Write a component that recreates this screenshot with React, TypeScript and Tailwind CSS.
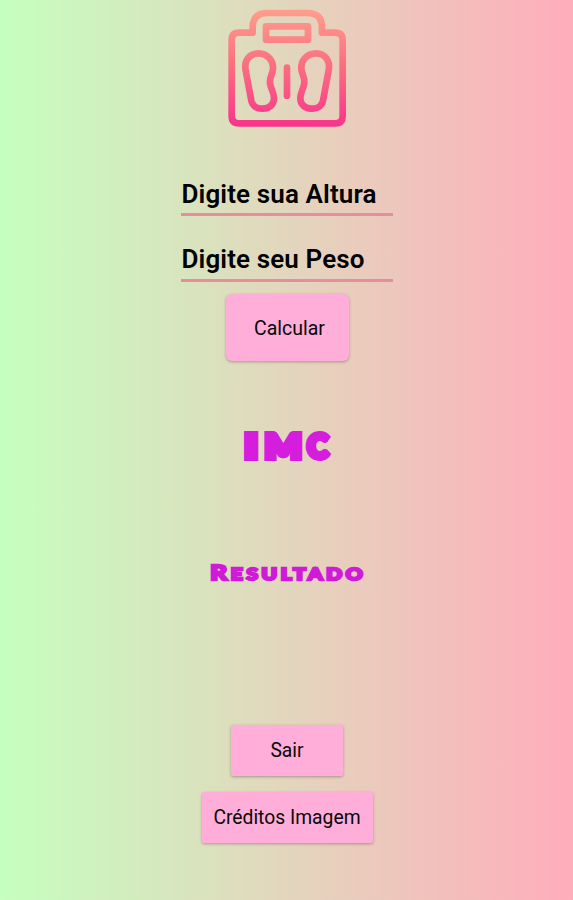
import React from "react";

function ScaleIcon() {
  return (
    <svg width="140" height="135" viewBox="0 0 420 405" fill="none" className="block">
      <defs>
        <linearGradient id="scale" gradientUnits="userSpaceOnUse" x1="0" y1="28" x2="0" y2="380">
          <stop offset="0" stopColor="#ff9e8c" />
          <stop offset="0.5" stopColor="#fb6c80" />
          <stop offset="1" stopColor="#f9338c" />
        </linearGradient>
      </defs>
      <g stroke="url(#scale)" strokeWidth="20" strokeLinecap="round" strokeLinejoin="round">
        <path d="M107 98H66Q44 98 44 120V348Q44 370 66 370H355Q377 370 377 348V120Q377 98 355 98H315V83Q315 39 271 39H151Q107 39 107 83Z" />
        <path d="M147 79H273V119H147Z" />
        <path d="M210 203V287" />
        <path d="M86 211C80 181 98 160 124 160C153 160 170 184 168 207C166 224 157 232 159 249C161 266 171 277 171 294C171 314 158 325 137 326C118 327 106 316 103 302Z" />
        <path d="M335 211C341 181 323 160 297 160C268 160 251 184 253 207C255 224 264 232 262 249C260 266 250 277 250 294C250 314 263 325 284 326C303 327 315 316 318 302Z" />
      </g>
    </svg>
  );
}

function Field({ label }: { label: string }) {
  return (
    <div className="h-[42px] w-[212px] border-b-[3px] border-[#e38f9c] pl-px pt-[1.5px]">
      <span className="block whitespace-nowrap text-[26px] font-semibold leading-[36px] tracking-[0.12px] text-black">
        {label}
      </span>
    </div>
  );
}

const buttonStyle =
  "flex items-center justify-center bg-[#ffadd9] leading-none whitespace-nowrap shadow-[0_1px_3px_rgba(80,50,60,0.4)]";

export default function App() {
  return (
    <main className="flex h-[900px] w-[573px] flex-col items-center overflow-hidden bg-gradient-to-r from-[#c6ffbf] to-[#ffadbb] font-['Roboto',sans-serif] text-[#080808] [--tw-gradient-position:to_right_in_srgb]">
      <ScaleIcon />
      <div className="mt-[39px]">
        <Field label="Digite sua Altura" />
      </div>
      <div className="mt-[23.5px]">
        <Field label="Digite seu Peso" />
      </div>
      <button className={`${buttonStyle} mt-[12.5px] ml-px h-[67px] w-[123px] rounded-[6px] pl-[5px] pt-[2px] text-[19.5px]`}>
        Calcular
      </button>
      <h1 className="mt-[65px] flex h-[40px] scale-x-[1.2] items-center pl-[5px] font-['Lato',sans-serif] text-[32px] font-black leading-none tracking-[5px] text-[#d51ddd] [-webkit-text-stroke:6px_#d51ddd]">
        <span className="inline-block translate-x-[1.5px] scale-x-[1.1]">I</span>
        <span className="inline-block translate-x-[3px]">M</span>
        <span className="inline-block translate-x-[0.5px] scale-x-[0.8]">C</span>
      </h1>
      <h2 className="mt-[91px] flex h-[30px] scale-x-[1.3] items-baseline pl-[2px] font-['Lato',sans-serif] text-[16px] font-black leading-[30px] tracking-[2.8px] text-[#cf1bd7] [-webkit-text-stroke:2.4px_#cf1bd7]">
        <span className="text-[20px]">R</span>ESULTADO
      </h2>
      <button className={`${buttonStyle} mt-[138px] ml-px h-[51px] w-[112px] rounded-[2px] pt-px text-[19.3px]`}>
        Sair
      </button>
      <button className={`${buttonStyle} mt-[16px] ml-px h-[51px] w-[171px] rounded-[2px] pt-px text-[19.3px]`}>
        Créditos Imagem
      </button>
    </main>
  );
}
